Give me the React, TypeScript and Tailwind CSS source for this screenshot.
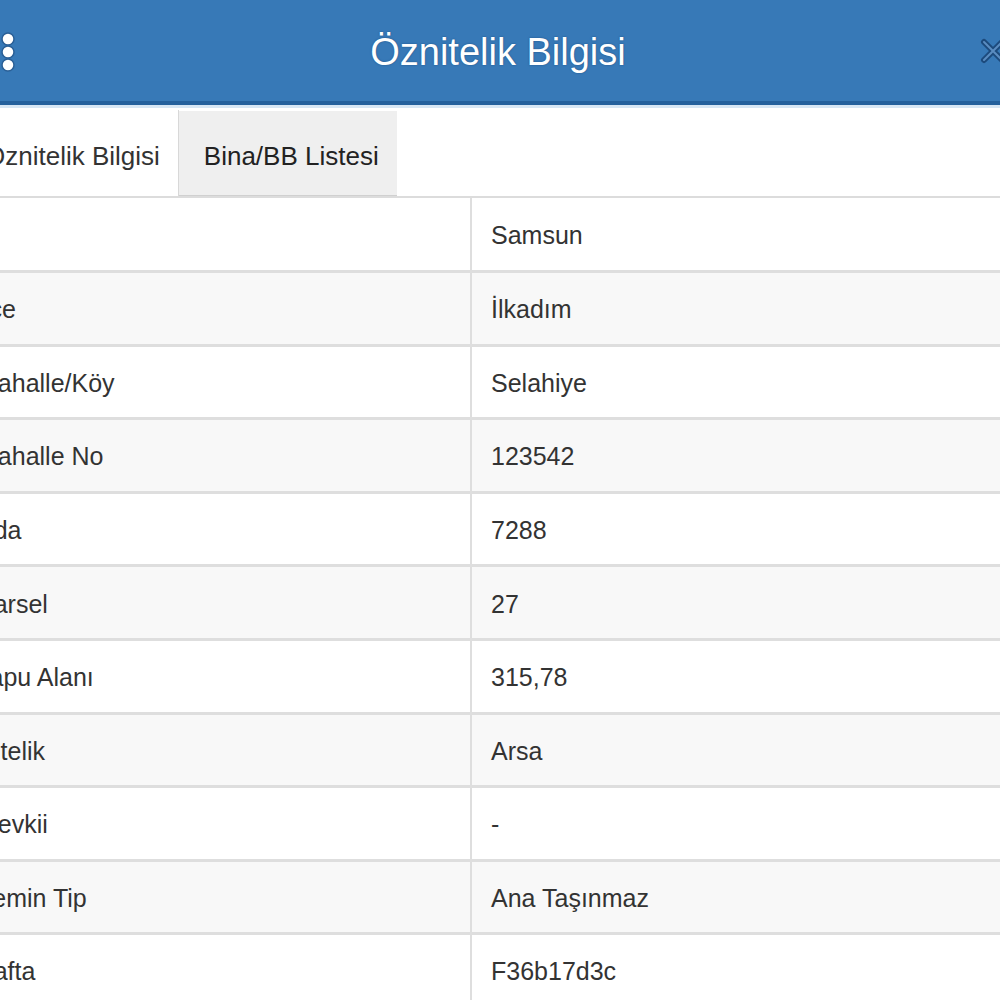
const rows: [string, string][] = [
  ["İl", "Samsun"],
  ["İlçe", "İlkadım"],
  ["Mahalle/Köy", "Selahiye"],
  ["Mahalle No", "123542"],
  ["Ada", "7288"],
  ["Parsel", "27"],
  ["Tapu Alanı", "315,78"],
  ["Nitelik", "Arsa"],
  ["Mevkii", "-"],
  ["Zemin Tip", "Ana Taşınmaz"],
  ["Pafta", "F36b17d3c"],
  ["Kat", "-"],
];

function DotsIcon() {
  return (
    <svg width="20" height="44" viewBox="0 0 20 44">
      <circle cx="10" cy="10" r="6" fill="#ffffff" stroke="#2a5f96" strokeWidth="1.5" />
      <circle cx="10" cy="23" r="6" fill="#ffffff" stroke="#2a5f96" strokeWidth="1.5" />
      <circle cx="10" cy="36" r="6" fill="#ffffff" stroke="#2a5f96" strokeWidth="1.5" />
    </svg>
  );
}

function CloseIcon() {
  return (
    <svg width="30" height="30" viewBox="0 0 30 30">
      <path d="M6 6 L24 24 M24 6 L6 24" stroke="#1c4a7c" strokeWidth="6" strokeLinecap="round" />
      <path d="M6 6 L24 24 M24 6 L6 24" stroke="#5a8cc0" strokeWidth="2" strokeLinecap="round" />
    </svg>
  );
}

export default function App() {
  return (
    <div className="h-[1000px] overflow-hidden bg-white">
      <div className="ml-[-40px] w-[1080px] font-['Liberation_Sans',Arial,sans-serif] text-[#333]">
        {/* header */}
        <div className="flex h-[105px] items-center justify-between bg-[#3779b7] pl-[38px] pr-[32px] border-b-[4px] border-[#24609c]">
          <DotsIcon />
          <h1 className="pt-[3px] text-[38px] text-white [text-shadow:0_0_2px_#1d4f84]">Öznitelik Bilgisi</h1>
          <CloseIcon />
        </div>
        <div className="h-[3px] bg-[#d6e6f4]" />

        {/* tabs */}
        <div className="flex h-[90px] items-end border-b-[2px] border-[#dcdcdc]">
          <div className="flex h-[86px] items-center bg-white pl-[25px] pr-[18px] pt-[6px] text-[26px] border-r border-[#d8d8d8]">
            Öznitelik Bilgisi
          </div>
          <div className="flex h-[85px] items-center bg-[#efefef] pl-[25px] pr-[18px] pt-[6px] text-[26px] text-[#222] border-b border-[#d0d0d0]">
            Bina/BB Listesi
          </div>
        </div>

        {/* table */}
        <table className="w-full border-collapse text-[25px]">
          <tbody>
            {rows.map(([label, value], i) => (
              <tr key={label} className={i % 2 === 0 ? "bg-white" : "bg-[#f8f8f8]"}>
                <td className="h-[73.6px] w-[511px] border-b-[3px] border-r-[2px] border-[#dedede] pl-[17px] pt-[3px] align-middle">
                  {label}
                </td>
                <td className="h-[73.6px] border-b-[3px] border-[#dedede] pl-[19px] pt-[3px] align-middle">{value}</td>
              </tr>
            ))}
          </tbody>
        </table>
      </div>
    </div>
  );
}
